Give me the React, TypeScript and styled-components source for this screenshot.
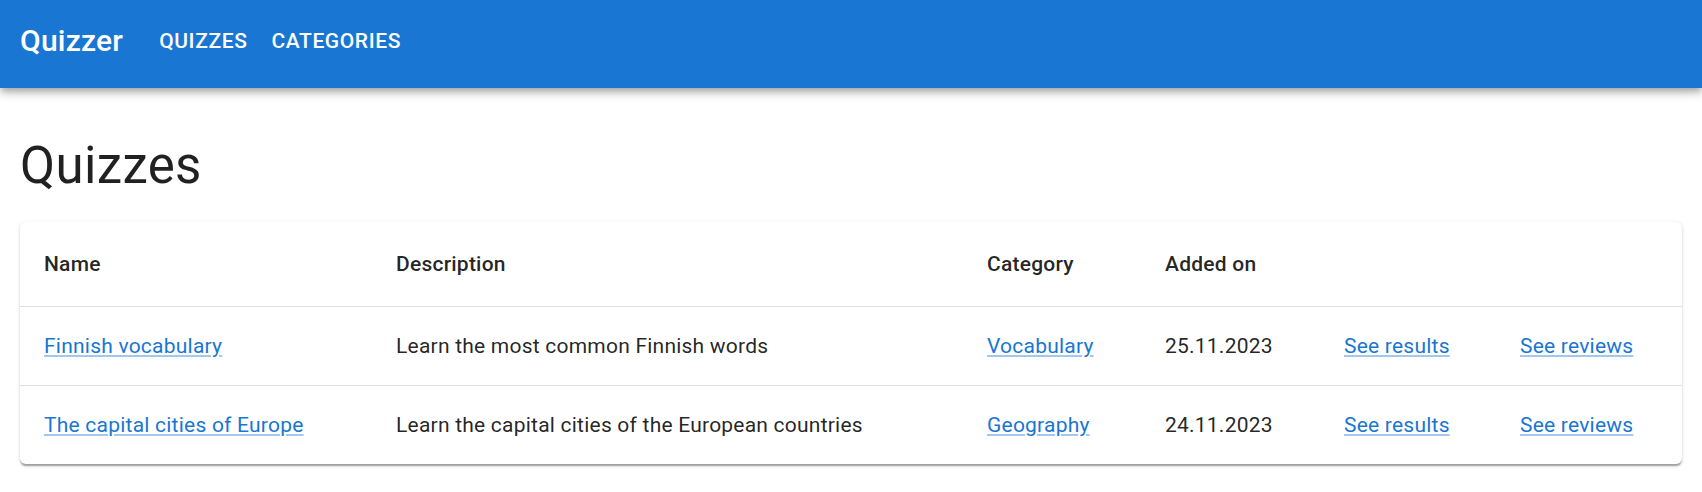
import styled, { createGlobalStyle } from "styled-components"

const GlobalStyle = createGlobalStyle`
	body {
		margin: 0;
		background: #fff;
		font-family: Roboto, "Liberation Sans", Arial, sans-serif;
		color: rgba(0, 0, 0, 0.87);
	}
`

const primary = "#1976d2"

type Quiz = {
	id: number
	name: string
	description: string
	category: string
	addedOn: string
}

const quizzes: Quiz[] = [
	{
		id: 1,
		name: "Finnish vocabulary",
		description: "Learn the most common Finnish words",
		category: "Vocabulary",
		addedOn: "25.11.2023"
	},
	{
		id: 2,
		name: "The capital cities of Europe",
		description: "Learn the capital cities of the European countries",
		category: "Geography",
		addedOn: "24.11.2023"
	}
]

const columnWidths = [352, 591, 178, 179, 176, 186]

export default function App() {
	return (
		<>
			<GlobalStyle />
			<AppBar>
				<Brand>Quizzer</Brand>
				<NavButton>Quizzes</NavButton>
				<NavButton>Categories</NavButton>
			</AppBar>
			<Page>
				<Heading>Quizzes</Heading>
				<Card>
					<Table>
						<colgroup>
							{columnWidths.map((w, i) => (
								<col key={i} style={{ width: w }} />
							))}
						</colgroup>
						<thead>
							<tr>
								<HeadCell>Name</HeadCell>
								<HeadCell>Description</HeadCell>
								<HeadCell>Category</HeadCell>
								<HeadCell>Added on</HeadCell>
								<HeadCell />
								<HeadCell />
							</tr>
						</thead>
						<tbody>
							{quizzes.map((quiz) => (
								<Row key={quiz.id}>
									<Cell>
										<TextLink href="#">{quiz.name}</TextLink>
									</Cell>
									<Cell>{quiz.description}</Cell>
									<Cell>
										<TextLink href="#">{quiz.category}</TextLink>
									</Cell>
									<Cell>{quiz.addedOn}</Cell>
									<Cell>
										<TextLink href="#">See results</TextLink>
									</Cell>
									<Cell>
										<TextLink href="#">See reviews</TextLink>
									</Cell>
								</Row>
							))}
						</tbody>
					</Table>
				</Card>
			</Page>
		</>
	)
}

const AppBar = styled.header`
	box-sizing: border-box;
	display: flex;
	align-items: center;
	height: 88px;
	padding: 0 20px 6px;
	background-color: ${primary};
	color: #fff;
	box-shadow: 0px 3px 6px -1.5px rgba(0, 0, 0, 0.2),
		0px 6px 7.5px 0px rgba(0, 0, 0, 0.14),
		0px 1.5px 15px 0px rgba(0, 0, 0, 0.12);
	position: relative;
	z-index: 1;
`

const Brand = styled.div`
	font-size: 30px;
	font-weight: 500;
	line-height: 1.6;
	letter-spacing: 0.0075em;
	margin-right: 24px;
`

const NavButton = styled.button`
	border: 0;
	background: none;
	color: inherit;
	font-family: inherit;
	font-size: 21px;
	font-weight: 500;
	line-height: 1.75;
	letter-spacing: 0.02857em;
	text-transform: uppercase;
	padding: 9px 12px;
	border-radius: 6px;
	cursor: pointer;
`

const Page = styled.main`
	padding: 47px 20px 20px;
`

const Heading = styled.h1`
	margin: 0 0 24px;
	font-size: 51px;
	font-weight: 400;
	line-height: 1.235;
	letter-spacing: 0.00735em;
`

const Card = styled.div`
	background: #fff;
	border-radius: 6px;
	overflow: hidden;
	box-shadow: 0px 3px 1.5px -1.5px rgba(0, 0, 0, 0.2),
		0px 1.5px 1.5px 0px rgba(0, 0, 0, 0.14),
		0px 1.5px 4.5px 0px rgba(0, 0, 0, 0.12);
`

const Table = styled.table`
	width: 100%;
	table-layout: fixed;
	border-collapse: collapse;
`

const HeadCell = styled.th`
	text-align: left;
	padding: 24px;
	font-size: 21px;
	font-weight: 500;
	line-height: 36px;
	letter-spacing: 0.01071em;
	border-bottom: 1px solid rgb(224, 224, 224);
	white-space: nowrap;
`

const Cell = styled.td`
	padding: 24px;
	font-size: 21px;
	font-weight: 400;
	line-height: 30px;
	letter-spacing: 0.01071em;
	border-bottom: 1px solid rgb(224, 224, 224);
	white-space: nowrap;
`

const Row = styled.tr`
	&:last-child ${Cell} {
		border-bottom: 0;
	}
`

const TextLink = styled.a`
	color: ${primary};
	text-decoration: underline;
	text-decoration-color: rgba(25, 118, 210, 0.4);
	&:hover {
		text-decoration-color: inherit;
	}
`
